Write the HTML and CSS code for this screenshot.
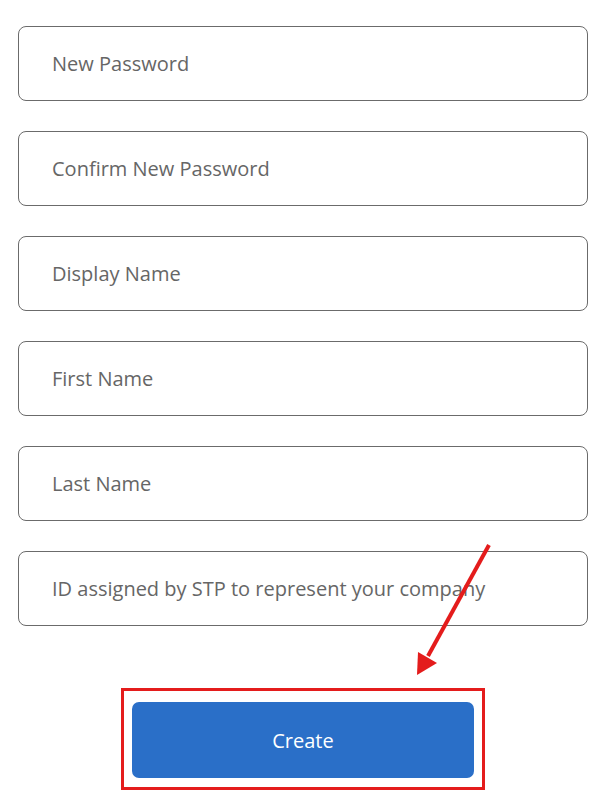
FILE: index.html
```html
<!DOCTYPE html>
<html>
<head>
<meta charset="utf-8">
<link rel="stylesheet" href="styles.css">
</head>
<body>
<div class="form">
  <div class="field">New Password</div>
  <div class="field">Confirm New Password</div>
  <div class="field">Display Name</div>
  <div class="field">First Name</div>
  <div class="field">Last Name</div>
  <div class="field">ID assigned by STP to represent your company</div>
  <div class="highlight">
    <button class="create">Create</button>
  </div>
</div>
<svg class="arrow" width="603" height="804" viewBox="0 0 603 804">
  <line x1="489" y1="545" x2="428" y2="656" stroke="#e41c1c" stroke-width="4"/>
  <polygon points="417,675 418,652 437,663" fill="#e41c1c"/>
</svg>
</body>
</html>
```
FILE: styles.css
```css
html, body {
  margin: 0;
  padding: 0;
  background: #ffffff;
}
body {
  position: relative;
  width: 603px;
  height: 804px;
  overflow: hidden;
  font-family: "Open Sans", "Noto Sans", sans-serif;
}
.form {
  display: flex;
  flex-direction: column;
  align-items: center;
  gap: 30px;
  width: 570px;
  margin-left: 18px;
  padding-top: 26px;
}
.field {
  box-sizing: border-box;
  width: 570px;
  height: 75px;
  border: 1px solid #6b6b6b;
  border-radius: 8px;
  display: flex;
  align-items: center;
  padding-left: 33px;
  font-size: 20px;
  color: #666666;
  white-space: nowrap;
}
.highlight {
  box-sizing: border-box;
  width: 364px;
  height: 102px;
  margin-top: 32px;
  border: 3px solid #e41c1c;
  padding: 11px 8px 9px 8px;
}
.create {
  display: block;
  width: 342px;
  height: 76px;
  border: none;
  border-radius: 7px;
  background: #2a6fc8;
  color: #ffffff;
  font-family: "Open Sans", "Noto Sans", sans-serif;
  font-size: 20px;
  padding: 0;
}
.arrow {
  position: absolute;
  left: 0;
  top: 0;
  pointer-events: none;
}
```
